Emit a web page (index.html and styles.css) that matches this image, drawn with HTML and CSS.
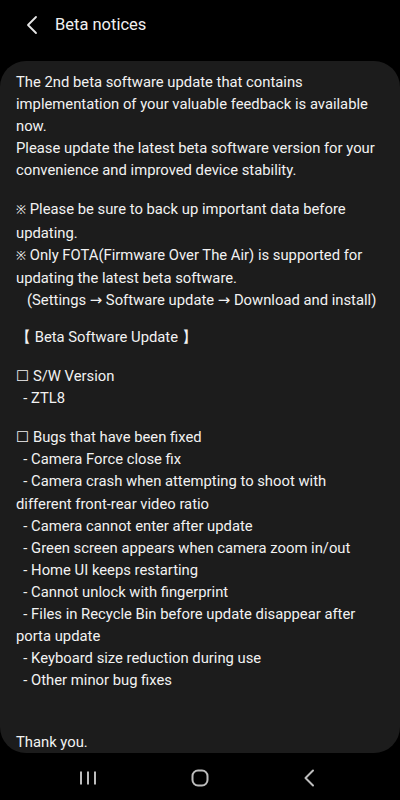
FILE: index.html
```html
<!DOCTYPE html>
<html>
<head>
<meta charset="utf-8">
<link rel="stylesheet" href="styles.css">
</head>
<body>
<div class="screen">
  <header class="topbar">
    <svg class="back" width="12" height="20" viewBox="0 0 12 20"><path d="M10 2 L2 10 L10 18" fill="none" stroke="#e6e6e6" stroke-width="1.8" stroke-linecap="round" stroke-linejoin="round"/></svg>
    <h1 class="title">Beta notices</h1>
  </header>
  <main class="card">
    <div class="para">
      <div class="ln">The 2nd beta software update that contains</div>
      <div class="ln">implementation of your valuable feedback is available</div>
      <div class="ln">now.</div>
      <div class="ln">Please update the latest beta software version for your</div>
      <div class="ln">convenience and improved device stability.</div>
    </div>
    <div class="para tight">
      <div class="ln"><span class="ref">※</span> Please be sure to back up important data before</div>
      <div class="ln">updating.</div>
      <div class="ln"><span class="ref">※</span> Only FOTA(Firmware Over The Air) is supported for</div>
      <div class="ln">updating the latest beta software.</div>
      <div class="ln">   (Settings → Software update → Download and install)</div>
    </div>
    <div class="para">
      <div class="ln">【 Beta Software Update 】</div>
    </div>
    <div class="para">
      <div class="ln">☐ S/W Version</div>
      <div class="ln">  - ZTL8</div>
    </div>
    <div class="para">
      <div class="ln">☐ Bugs that have been fixed</div>
      <div class="ln">  - Camera Force close fix</div>
      <div class="ln">  - Camera crash when attempting to shoot with</div>
      <div class="ln">different front-rear video ratio</div>
      <div class="ln">  - Camera cannot enter after update</div>
      <div class="ln">  - Green screen appears when camera zoom in/out</div>
      <div class="ln">  - Home UI keeps restarting</div>
      <div class="ln">  - Cannot unlock with fingerprint</div>
      <div class="ln">  - Files in Recycle Bin before update disappear after</div>
      <div class="ln">porta update</div>
      <div class="ln">  - Keyboard size reduction during use</div>
      <div class="ln">  - Other minor bug fixes</div>
    </div>
    <div class="para last">
      <div class="ln">Thank you.</div>
    </div>
  </main>
  <nav class="navbar">
    <svg width="18" height="16" viewBox="0 0 18 16"><path d="M2 1.5 V14.5 M9 1.5 V14.5 M16 1.5 V14.5" stroke="#bdbdbd" stroke-width="2"/></svg>
    <svg width="18" height="18" viewBox="0 0 18 18"><rect x="1.5" y="1.5" width="15" height="15" rx="5.5" fill="none" stroke="#bdbdbd" stroke-width="2"/></svg>
    <svg width="12" height="18" viewBox="0 0 12 18"><path d="M10 1.5 L2.5 9 L10 16.5" fill="none" stroke="#bdbdbd" stroke-width="2" stroke-linecap="round" stroke-linejoin="round"/></svg>
  </nav>
</div>
</body>
</html>
```

FILE: styles.css
```css
* { box-sizing: border-box; }
html, body {
  margin: 0;
  padding: 0;
  background: #000;
}
body {
  font-family: Roboto, "Noto Sans", "DejaVu Sans", sans-serif;
  color: #f2f2f2;
}
.screen {
  width: 400px;
  height: 800px;
  display: flex;
  flex-direction: column;
  overflow: hidden;
}
.topbar {
  height: 61px;
  display: flex;
  align-items: center;
  padding: 0 0 12px 26px;
}
.back {
  display: block;
  margin-right: 17px;
}
.title {
  margin: 0;
  font-size: 16.5px;
  font-weight: 400;
  color: #f0f0f0;
}
.card {
  height: 692px;
  background: #1c1c1c;
  border-radius: 26px;
  padding: 10px 0 0 16px;
  font-size: 14.8px;
  line-height: 22.1px;
  display: flex;
  flex-direction: column;
}
.para {
  margin-bottom: 17px;
}
.para.tight {
  margin-bottom: 15px;
}
.para.last {
  margin: auto 0 1px 0;
  line-height: 20px;
}
.ln {
  white-space: pre;
}
.ref {
  font-size: 12px;
}
.navbar {
  flex: 1;
  display: flex;
  align-items: center;
  gap: 94px;
  padding: 3px 0 0 79px;
}
```
